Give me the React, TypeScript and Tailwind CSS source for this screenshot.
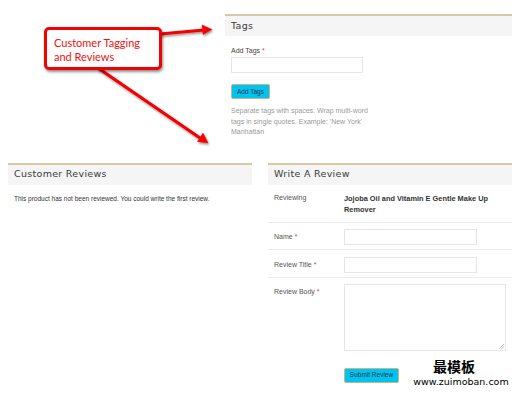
import React from 'react'

const HEAD = "font-['DejaVu_Sans',sans-serif] text-[9.5px] tracking-[0.3px] text-[#3a3a3a]"

function PanelHead({ title }: { title: string }) {
  return (
    <div className="border-t-2 border-[#d8c9a6] bg-[#f5f5f5] h-[22px] flex items-center px-[6px]">
      <span className={HEAD}>{title}</span>
    </div>
  )
}

function Req() {
  return <span className="text-[#e3353a] ml-[2px]">*</span>
}

function Btn({ label, w }: { label: string; w: string }) {
  return (
    <div
      className={`${w} h-[15px] bg-[#00c3ef] border border-[#c9b483] rounded-[2px] flex items-center justify-center text-[6.5px] text-[#1c3550]`}
    >
      {label}
    </div>
  )
}

function FormRow({
  label, children, className,
}: {
  label: React.ReactNode
  children: React.ReactNode
  className: string
}) {
  return (
    <div className={`flex border-b border-[#ececec] px-[6px] ${className}`}>
      <div className="w-[70px] text-[7px] text-[#555] flex-shrink-0">{label}</div>
      <div className="flex-1">{children}</div>
    </div>
  )
}

export default function App() {
  return (
    <div className="relative w-[520px] h-[396px] bg-white overflow-hidden font-['Liberation_Sans',Arial,sans-serif]">
      {/* Tags */}
      <div className="pl-[225px] pr-[8px] pt-[14px]">
        <PanelHead title="Tags" />
        <div className="px-[6px] pt-[10px]">
          <div className="text-[7px] text-[#444] leading-[9px]">Add Tags<Req /></div>
          <div className="mt-[2px] w-[132px] h-[16px] border border-[#e6e6e6]" />
          <div className="mt-[11px]">
            <Btn label="Add Tags" w="w-[39px]" />
          </div>
          <p className="mt-[7px] w-[150px] text-[7px] leading-[10.5px] text-[#9a9a9a]">
            Separate tags with spaces. Wrap multi-word tags in single quotes. Example: 'New York' Manhattan
          </p>
        </div>
      </div>

      <div className="flex gap-[16px] px-[8px] mt-[25px]">
        {/* Customer Reviews */}
        <div className="w-[244px]">
          <PanelHead title="Customer Reviews" />
          <p className="px-[6px] pt-[9px] text-[6.5px] text-[#333]">
            This product has not been reviewed. You could write the first review.
          </p>
        </div>

        {/* Write A Review */}
        <div className="w-[244px]">
          <PanelHead title="Write A Review" />
          <FormRow label="Reviewing" className="h-[38px] pt-[8px]">
            <div className="text-[7.4px] font-bold text-[#333] leading-[11px]">
              Jojoba Oil and Vitamin E Gentle Make Up Remover
            </div>
          </FormRow>
          <FormRow label={<span className="leading-[16px]">Name<Req /></span>} className="h-[27px] pt-[6px]">
            <div className="w-[133px] h-[16px] border border-[#e6e6e6]" />
          </FormRow>
          <FormRow label={<span className="leading-[16px]">Review Title<Req /></span>} className="h-[28px] pt-[7px]">
            <div className="w-[133px] h-[16px] border border-[#e6e6e6]" />
          </FormRow>
          <div className="flex px-[6px] pt-[6px]">
            <div className="w-[70px] text-[7px] text-[#555] pt-[3px]">Review Body<Req /></div>
            <div>
              <div className="relative w-[162px] h-[67px] border border-[#e6e6e6]">
                <svg className="absolute right-[1px] bottom-[1px]" width="5" height="5" viewBox="0 0 5 5">
                  <path d="M5 0L0 5M5 2.5L2.5 5" stroke="#aaa" strokeWidth="0.7" />
                </svg>
              </div>
              <div className="mt-[17px]">
                <Btn label="Submit Review" w="w-[55px]" />
              </div>
            </div>
          </div>
        </div>
      </div>

      {/* annotation callout */}
      <svg className="absolute left-0 top-0 pointer-events-none" width="520" height="396">
        <defs>
          <filter id="sh" x="-20%" y="-20%" width="140%" height="140%">
            <feDropShadow dx="1" dy="1.5" stdDeviation="1.2" floodColor="#000" floodOpacity="0.45" />
          </filter>
        </defs>
        <g filter="url(#sh)" fill="#f40000" stroke="#f40000">
          <path d="M160 34L204 30" strokeWidth="3.2" fill="none" />
          <path d="M212 29.5L202 25L203 34.5Z" strokeWidth="0.5" />
          <path d="M98 68L200 138" strokeWidth="3.2" fill="none" />
          <path d="M208 143L197.5 141.5L203 133Z" strokeWidth="0.5" />
        </g>
      </svg>
      <div className="absolute left-[44px] top-[27px] w-[118px] h-[43px] bg-white border-[3px] border-[#f40000] rounded-[5px] shadow-[1px_2px_3px_rgba(0,0,0,0.45)] pl-[7px] pt-[6px] font-['Lato',sans-serif] text-[11px] leading-[14px] text-[#f01010]">
        Customer Tagging
        <br />
        and Reviews
      </div>

      {/* watermark */}
      <div className="absolute left-[410px] top-[357px] w-[102px] text-center text-black">
        <div className="font-['Noto_Sans_CJK_SC',serif] font-bold text-[14px] leading-[19px] pr-[14px]">最模板</div>
        <div className="font-['DejaVu_Sans',sans-serif] text-[9.5px] leading-[12px]">www.zuimoban.com</div>
      </div>
    </div>
  )
}
